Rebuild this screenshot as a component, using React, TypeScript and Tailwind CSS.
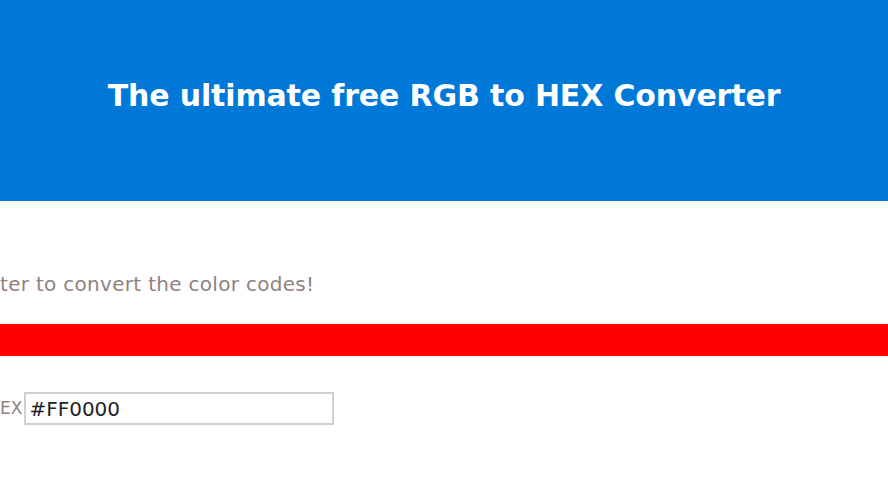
import { useState } from 'react';

// RGB -> HEX 변환기 화면
export default function App() {
  const [hex, setHex] = useState('#FF0000');

  return (
    <div className="min-h-[500px] w-full overflow-hidden bg-white" style={{ fontFamily: '"DejaVu Sans", "Liberation Sans", sans-serif' }}>
      <header className="flex h-[201px] items-center justify-center bg-[#0078d7]">
        <h1 className="pb-[10px] text-[30px] font-bold tracking-[-0.15px] text-white">
          The ultimate free RGB to HEX Converter
        </h1>
      </header>

      <main className="pt-[67px]">
        <p className="whitespace-nowrap text-[20px] leading-[32px] tracking-[0.3px] text-[#8e8282]">
          ter to convert the color codes!
        </p>

        <div className="mt-[24px] h-[32px] w-full" style={{ backgroundColor: hex }} />

        <div className="mt-[36px] flex items-center gap-[2px]">
          <label className="text-[17px] text-[#8e8282]">EX</label>
          <input
            value={hex}
            onChange={(e) => setHex(e.target.value)}
            className="h-[33px] w-[310px] border-2 border-[#cfcfcf] px-[3px] text-[20px] text-[#222] outline-none"
          />
        </div>
      </main>
    </div>
  );
}
